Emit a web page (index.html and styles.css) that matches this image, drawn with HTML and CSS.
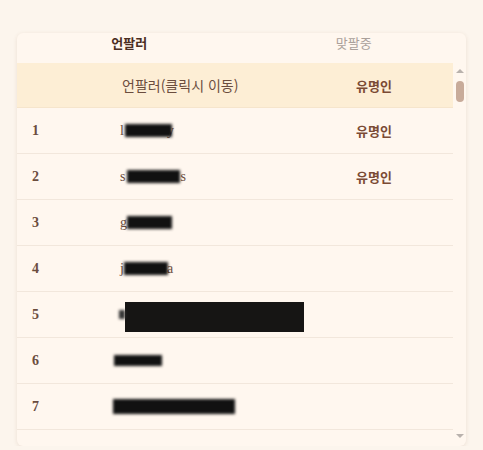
FILE: index.html
```html
<!DOCTYPE html>
<html lang="ko">
<head>
<meta charset="utf-8">
<title>언팔러</title>
<link rel="stylesheet" href="styles.css">
</head>
<body>
<div class="card">
  <div class="tabs">
    <div class="tab active">언팔러</div>
    <div class="tab">맞팔중</div>
  </div>
  <div class="body">
    <div class="list">
      <div class="row head">
        <div class="c-num"></div>
        <div class="c-name head-name">언팔러(클릭시 이동)</div>
        <div class="c-fam head-fam">유명인</div>
      </div>
      <div class="row">
        <div class="c-num">1</div>
        <div class="c-name">l<span class="mask m1"></span>y</div>
        <div class="c-fam">유명인</div>
      </div>
      <div class="row">
        <div class="c-num">2</div>
        <div class="c-name">s<span class="mask m2"></span>s</div>
        <div class="c-fam">유명인</div>
      </div>
      <div class="row">
        <div class="c-num">3</div>
        <div class="c-name">g<span class="mask m3"></span></div>
        <div class="c-fam"></div>
      </div>
      <div class="row">
        <div class="c-num">4</div>
        <div class="c-name">j<span class="mask m4"></span>a</div>
        <div class="c-fam"></div>
      </div>
      <div class="row">
        <div class="c-num">5</div>
        <div class="c-name"><span class="mask m5a"></span><span class="block"></span></div>
        <div class="c-fam"></div>
      </div>
      <div class="row">
        <div class="c-num">6</div>
        <div class="c-name"><span class="mask m6"></span></div>
        <div class="c-fam"></div>
      </div>
      <div class="row">
        <div class="c-num">7</div>
        <div class="c-name"><span class="mask m7"></span></div>
        <div class="c-fam"></div>
      </div>
      <div class="row">
        <div class="c-num"></div>
        <div class="c-name"></div>
        <div class="c-fam"></div>
      </div>
    </div>
    <div class="scrollbar">
      <span class="arrow up"></span>
      <span class="thumb"></span>
      <span class="track"></span>
      <span class="arrow down"></span>
    </div>
  </div>
</div>
</body>
</html>
```

FILE: styles.css
```css
* {
  box-sizing: border-box;
}

body {
  margin: 0;
  background: #fcf5ed;
  font-family: "Liberation Serif", "Noto Sans CJK KR", serif;
  font-size: 13px;
  color: #6d4d3d;
}

.card {
  margin: 33px 0 0 17px;
  width: 449px;
  height: 413px;
  background: #fff7ef;
  border-radius: 6px;
  box-shadow: 0 1px 4px rgba(120, 80, 50, 0.13);
  display: flex;
  flex-direction: column;
  overflow: hidden;
}

/* tab strip */
.tabs {
  height: 30px;
  display: flex;
  flex: none;
}

.tab {
  flex: 1;
  text-align: center;
  line-height: 20px;
  font-family: "Noto Sans CJK KR", sans-serif;
  font-size: 13px;
  color: #aaa09a;
}

.tab.active {
  color: #4b2d22;
  font-weight: 700;
}

/* list + scrollbar */
.body {
  flex: 1;
  display: flex;
  min-height: 0;
}

.list {
  flex: 1;
  overflow: hidden;
}

.row {
  display: grid;
  grid-template-columns: 88px 236px 1fr;
  align-items: center;
  height: 46px;
  padding-left: 15px;
  border-bottom: 1px solid #f2e7dc;
}

.row.head {
  height: 45px;
  background: #fdeed5;
  border-bottom: 1px solid #f6e5cc;
}

.head-name {
  padding-left: 2px;
  font-family: "Noto Sans CJK KR", sans-serif;
  color: #a48470;
}

.head-fam {
  font-family: "Noto Sans CJK KR", sans-serif;
  color: #86604b;
  font-weight: 700;
}

.c-num {
  color: #6b4d3e;
  font-size: 14px;
  font-weight: 700;
}

.c-name {
  color: #6b4d3e;
  font-size: 14px;
  display: flex;
  align-items: center;
  white-space: nowrap;
}

.c-fam {
  font-family: "Noto Sans CJK KR", sans-serif;
  font-weight: 700;
  color: #7b4b35;
}

/* redacted handles */
.mask {
  display: inline-block;
  background: #111;
  filter: blur(1.4px);
  height: 13px;
}

.m1 { width: 47px; margin: 0 -5px 0 1px; }
.m2 { width: 53px; margin-left: 2px; }
.m3 { width: 45px; }
.m4 { width: 44px; margin-right: -1px; }
.m5a { width: 6px; height: 9px; margin-left: -1px; background: #333; }
.m6 { width: 48px; margin-left: -6px; height: 11px; }
.m7 { width: 122px; height: 15px; margin-left: -7px; }

.block {
  display: inline-block;
  width: 179px;
  height: 30px;
  background: #161514;
  margin-top: 4px;
}

/* vertical scrollbar */
.scrollbar {
  width: 13px;
  flex: none;
  display: flex;
  flex-direction: column;
  align-items: center;
  padding: 6px 0 8px;
}

.arrow {
  width: 0;
  height: 0;
  border-left: 4px solid transparent;
  border-right: 4px solid transparent;
}

.arrow.up {
  border-bottom: 4px solid #b9b2ad;
}

.arrow.down {
  border-top: 4px solid #b9b2ad;
}

.thumb {
  margin-top: 8px;
  width: 8px;
  height: 21px;
  border-radius: 4px;
  background: #c8ab9a;
}

.track {
  flex: 1;
}
```
